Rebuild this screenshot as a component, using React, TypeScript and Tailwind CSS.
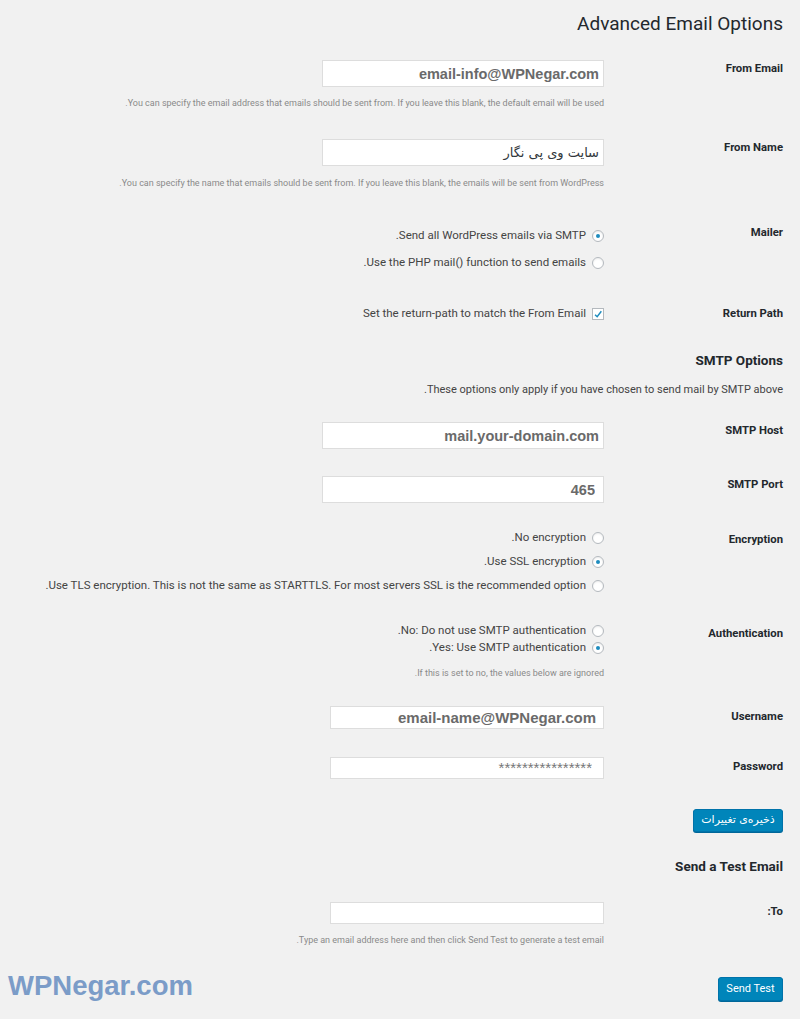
import type { ReactNode } from 'react';

const ui = { fontFamily: 'Roboto, "Noto Sans", "DejaVu Sans", sans-serif' };
const val = { fontFamily: '"Liberation Sans", Arial, "DejaVu Sans", sans-serif' };
const fa = { fontFamily: '"DejaVu Sans", sans-serif' };

function Radio({ checked }: { checked?: boolean }) {
  return (
    <span className="flex h-[12px] w-[12px] shrink-0 items-center justify-center rounded-full border border-[#b4b9be] bg-white shadow-[inset_0_1px_2px_rgba(0,0,0,0.08)]">
      {checked && <span className="h-[4px] w-[4px] rounded-full bg-[#1e8cbe]" />}
    </span>
  );
}

function Check() {
  return (
    <span className="flex h-[12px] w-[12px] shrink-0 items-center justify-center border border-[#b4b9be] bg-white">
      <svg viewBox="0 0 12 12" className="h-[11px] w-[11px]">
        <path d="M2.5 6.2 L5 8.6 L10 2.2" fill="none" stroke="#1e8cbe" strokeWidth="1.8" />
      </svg>
    </span>
  );
}

function Row({ label, top, labelPad = '', children }: { label: string; top: string; labelPad?: string; children: ReactNode }) {
  return (
    <div className={`flex ${top}`}>
      <div className={`w-[179px] shrink-0 text-[11.3px] font-bold leading-[18px] text-[#23282d] ${labelPad}`}>{label}</div>
      <div className="flex-1">{children}</div>
    </div>
  );
}

function Desc({ children, top }: { children: ReactNode; top: string }) {
  return <p className={`${top} text-[9px] leading-[12px] text-[#8a8a8a]`}>{children}</p>;
}

function Option({ checked, h, children }: { checked?: boolean; h: string; children: ReactNode }) {
  return (
    <label className={`flex ${h} items-center gap-[6px] text-[11.5px] text-[#444]`}>
      <Radio checked={checked} />
      <span>{children}</span>
    </label>
  );
}

export default function App() {
  return (
    <div dir="rtl" className="min-h-screen bg-[#f1f1f1] pr-[17px] pl-[8px]" style={ui}>
      <h1 className="pt-[12px] text-[19px] leading-[24px] font-normal text-[#23282d]">Advanced Email Options</h1>

      <Row label="From Email" top="mt-[24px]">
        <input
          readOnly
          dir="ltr"
          value="email-info@WPNegar.com"
          className="block h-[27px] w-[282px] border border-[#dddddd] bg-white px-[4px] text-right text-[14.5px] font-bold text-[#6a6a6a] outline-none"
          style={val}
        />
        <Desc top="mt-[10px]">You can specify the email address that emails should be sent from. If you leave this blank, the default email will be used.</Desc>
      </Row>

      <Row label="From Name" top="mt-[30px]">
        <input
          readOnly
          value="سایت وی پی نگار"
          className="block h-[27px] w-[282px] border border-[#dddddd] bg-white px-[4px] text-right text-[13px] text-[#32373c] outline-none"
          style={fa}
        />
        <Desc top="mt-[11px]">You can specify the name that emails should be sent from. If you leave this blank, the emails will be sent from WordPress.</Desc>
      </Row>

      <Row label="Mailer" top="mt-[35px]">
        <div className="flex flex-col gap-[3px]">
          <Option checked h="h-[24px]">Send all WordPress emails via SMTP.</Option>
          <Option h="h-[24px]">Use the PHP mail() function to send emails.</Option>
        </div>
      </Row>

      <Row label="Return Path" top="mt-[30px]">
        <label className="flex h-[18px] items-center gap-[6px] text-[11.5px] text-[#444]">
          <Check />
          <span>Set the return-path to match the From Email</span>
        </label>
      </Row>

      <h2 className="mt-[27px] text-[13.5px] leading-[20px] font-bold text-[#23282d]">SMTP Options</h2>
      <p className="mt-[13px] text-[11px] leading-[14px] text-[#444]">These options only apply if you have chosen to send mail by SMTP above.</p>

      <Row label="SMTP Host" top="mt-[25px]">
        <input
          readOnly
          dir="ltr"
          value="mail.your-domain.com"
          className="block h-[27px] w-[282px] border border-[#dddddd] bg-white px-[4px] text-right text-[14.5px] font-bold text-[#6a6a6a] outline-none"
          style={val}
        />
      </Row>

      <Row label="SMTP Port" top="mt-[27px]">
        <input
          readOnly
          dir="ltr"
          value="465"
          className="block h-[27px] w-[282px] border border-[#dddddd] bg-white px-[8px] text-right text-[14.5px] font-bold text-[#6a6a6a] outline-none"
          style={val}
        />
      </Row>

      <Row label="Encryption" top="mt-[25px]" labelPad="pt-[3px]">
        <div className="flex flex-col gap-[4px]">
          <Option h="h-[20px]">No encryption.</Option>
          <Option checked h="h-[20px]">Use SSL encryption.</Option>
          <Option h="h-[20px]">Use TLS encryption. This is not the same as STARTTLS. For most servers SSL is the recommended option.</Option>
        </div>
      </Row>

      <Row label="Authentication" top="mt-[26px]" labelPad="pt-[3px]">
        <div className="flex flex-col">
          <Option h="h-[17px]">No: Do not use SMTP authentication.</Option>
          <Option checked h="h-[17px]">Yes: Use SMTP authentication.</Option>
        </div>
        <Desc top="mt-[11px]">If this is set to no, the values below are ignored.</Desc>
      </Row>

      <Row label="Username" top="mt-[27px]" labelPad="pt-[2px]">
        <input
          readOnly
          dir="ltr"
          value="email-name@WPNegar.com"
          className="block h-[23px] w-[274px] border border-[#dddddd] bg-white px-[7px] text-right text-[15px] font-bold text-[#6a6a6a] outline-none"
          style={val}
        />
      </Row>

      <Row label="Password" top="mt-[28px]" labelPad="pt-[1px]">
        <input
          readOnly
          dir="ltr"
          value="****************"
          className="block h-[22px] w-[274px] border border-[#dddddd] bg-white px-[11px] text-right text-[15px] text-[#777] outline-none"
          style={val}
        />
      </Row>

      <button
        type="button"
        className="mt-[30px] block h-[23px] w-[90px] rounded-[3px] border border-[#0073aa] bg-[#0085ba] text-[11px] text-white shadow-[0_1px_0_#006799]"
        style={fa}
      >
        ذخیره‌ی تغییرات
      </button>

      <h2 className="mt-[24px] text-[13.5px] leading-[20px] font-bold text-[#23282d]">Send a Test Email</h2>

      <Row label="To:" top="mt-[26px]" labelPad="pt-[1px]">
        <input readOnly value="" className="block h-[22px] w-[274px] border border-[#dddddd] bg-white outline-none" />
        <Desc top="mt-[10px]">Type an email address here and then click Send Test to generate a test email.</Desc>
      </Row>

      <div className="mt-[24px] flex items-end justify-between">
        <button
          type="button"
          className="mb-[1px] h-[24px] w-[65px] rounded-[3px] border border-[#0073aa] bg-[#0085ba] text-[11px] text-white shadow-[0_1px_0_#006799]"
        >
          Send Test
        </button>
        <span dir="ltr" className="text-[27.5px] leading-[32px] font-bold text-[#7b9cc8]" style={val}>
          WPNegar.com
        </span>
      </div>
    </div>
  );
}
